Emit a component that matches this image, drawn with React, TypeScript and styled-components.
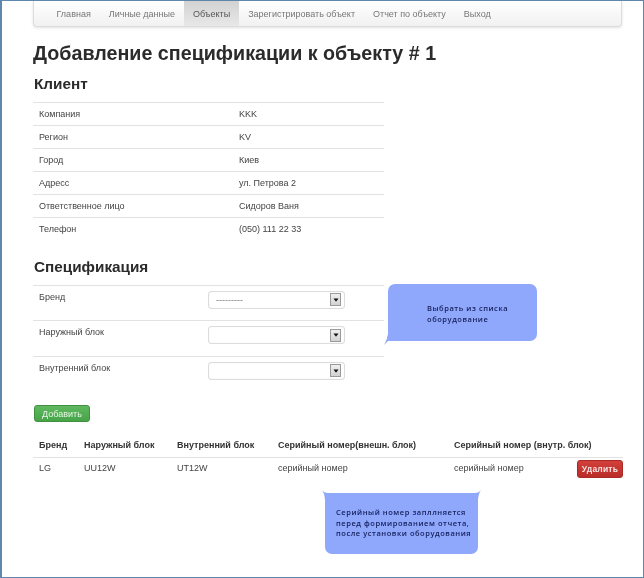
import React from "react";
import styled, { createGlobalStyle } from "styled-components";

const Global = createGlobalStyle`
  html, body { margin: 0; padding: 0; background: #fff; }
  body { font-family: "Liberation Sans", Arial, sans-serif; color: #333; }
  * { box-sizing: border-box; }
`;

const Frame = styled.div`
  position: relative;
  width: 644px;
  height: 578px;
  overflow: hidden;
  border: 1px solid #5f87ad;
  border-left-width: 2px;
  padding: 0 20px 0 31px;
  background: #fff;
  filter: blur(0.4px);
`;

const Navbar = styled.nav`
  display: flex;
  height: 26px;
  width: 589px;
  padding-left: 13.5px;
  border: 1px solid #dcdcdc;
  border-top: 0;
  border-radius: 0 0 4px 4px;
  background: linear-gradient(#ffffff, #f1f1f1);
  box-shadow: 0 1px 3px rgba(0, 0, 0, 0.12);
`;

const NavLink = styled.a<{ $active?: boolean }>`
  display: flex;
  align-items: center;
  padding: 1px 9px 0;
  font-size: 9px;
  color: ${(p) => (p.$active ? "#555" : "#777")};
  background: ${(p) => (p.$active ? "linear-gradient(#d2d2d2, #e8e8e8)" : "transparent")};
`;

const Title = styled.h1`
  margin: 14px 0 0;
  height: 25px;
  font-size: 19.7px;
  line-height: 25px;
  font-weight: 700;
  color: #2b2b2b;
  white-space: nowrap;
`;

const Subtitle = styled.h2`
  margin: 0 0 0 1px;
  font-size: 15.3px;
  line-height: 20px;
  font-weight: 700;
  color: #2b2b2b;
`;

const ClientHeading = styled(Subtitle)`
  margin-top: 8px;
  margin-bottom: 8px;
`;

const SpecHeading = styled(Subtitle)`
  margin-top: 16px;
  margin-bottom: 8px;
`;

const InfoTable = styled.table`
  width: 351px;
  border-collapse: collapse;
  font-size: 9px;
  color: #444;
`;

const InfoRow = styled.tr`
  height: 23px;
  border-top: 1px solid #e2e2e2;
`;

const InfoLabel = styled.td`
  width: 206px;
  padding: 0 0 0 6px;
`;

const InfoValue = styled.td`
  padding: 0;
`;

const SpecRow = styled.div`
  display: flex;
  justify-content: space-between;
  align-items: flex-start;
  width: 351px;
  height: 35.5px;
  padding: 5px 39px 0 6px;
  border-top: 1px solid #e2e2e2;
  font-size: 9px;
  color: #444;
`;

const SpecLabel = styled.span`
  margin-top: 1px;
  line-height: 11px;
`;

const FakeSelect = styled.div`
  display: flex;
  align-items: center;
  justify-content: space-between;
  width: 137px;
  height: 18px;
  padding: 0 3px 0 7px;
  border: 1px solid #dcdcdc;
  border-radius: 3px;
  background: #fff;
  box-shadow: inset 0 0 1px rgba(0, 0, 0, 0.15);
  color: #777;
  font-size: 9px;
`;

const SelectArrow = styled.span`
  display: flex;
  align-items: center;
  justify-content: center;
  width: 11px;
  height: 13px;
  border: 1px solid #9a9a9a;
  background: linear-gradient(#efefef, #d2d2d2);
`;

const AddButton = styled.button`
  display: block;
  width: 56px;
  height: 17px;
  margin: 14px 0 0 1px;
  padding: 0;
  border: 1px solid #3f9140;
  border-radius: 3px;
  background: linear-gradient(#5fb85f, #47a447);
  color: #e8f5e8;
  font: 9px "Liberation Sans", Arial, sans-serif;
`;

const DataTable = styled.table`
  width: 590px;
  margin-top: 17px;
  border-collapse: collapse;
  table-layout: fixed;
  font-size: 9px;
  color: #444;
`;

const HeadCell = styled.th<{ $w: number }>`
  width: ${(p) => p.$w}px;
  height: 18px;
  padding: 0 0 5px 6px;
  text-align: left;
  font-weight: 700;
  color: #333;
  white-space: nowrap;
  border-bottom: 1px solid #e2e2e2;
`;

const BodyCell = styled.td`
  height: 22px;
  padding: 0 0 0 6px;
  white-space: nowrap;
`;

const ActionCell = styled.td`
  padding: 2px 0 0;
  text-align: right;
`;

const DeleteButton = styled.button`
  display: block;
  width: 46px;
  height: 18px;
  padding: 0;
  border: 1px solid #ac2925;
  border-radius: 3px;
  background: linear-gradient(#d2403a, #b92c28);
  color: #f6e2e2;
  font: 700 8.5px "Liberation Sans", Arial, sans-serif;
  letter-spacing: 0.2px;
`;

const Bubble = styled.div<{ $x: number; $y: number; $w: number; $h: number }>`
  position: absolute;
  left: ${(p) => p.$x}px;
  top: ${(p) => p.$y}px;
  width: ${(p) => p.$w}px;
  height: ${(p) => p.$h}px;
  border-radius: 7px;
  background: #90a8fb;
  color: #141f5c;
  font-family: "Open Sans", "Noto Sans", sans-serif;
  font-size: 7.5px;
  font-weight: 600;
  line-height: 10.7px;
  letter-spacing: 0.55px;
`;

const BubbleText = styled.div<{ $l: number; $t: number }>`
  padding: ${(p) => p.$t}px 0 0 ${(p) => p.$l}px;
  white-space: nowrap;
`;

const Tail = styled.svg<{ $x: number; $y: number }>`
  position: absolute;
  left: ${(p) => p.$x}px;
  top: ${(p) => p.$y}px;
  fill: #90a8fb;
`;

const client: [string, string][] = [
  ["Компания", "KKK"],
  ["Регион", "KV"],
  ["Город", "Киев"],
  ["Адресс", "ул. Петрова 2"],
  ["Ответственное лицо", "Сидоров Ваня"],
  ["Телефон", "(050) 111 22 33"],
];

const spec: [string, string][] = [
  ["Бренд", "---------"],
  ["Наружный блок", ""],
  ["Внутренний блок", ""],
];

const heads: [string, number][] = [
  ["Бренд", 45],
  ["Наружный блок", 93],
  ["Внутренний блок", 101],
  ["Серийный номер(внешн. блок)", 176],
  ["Серийный номер (внутр. блок)", 129],
];

const Arrow = () => (
  <svg width="6" height="4" viewBox="0 0 6 4">
    <path d="M0.5 0.5H5.5L3 3.8Z" fill="#111" />
  </svg>
);

export default function App() {
  return (
    <>
      <Global />
      <Frame>
        <Navbar>
          {["Главная", "Личные данные", "Объекты", "Зарегистрировать объект", "Отчет по объекту", "Выход"].map((n) => (
            <NavLink key={n} $active={n === "Объекты"}>{n}</NavLink>
          ))}
        </Navbar>
        <Title>Добавление спецификации к объекту # 1</Title>
        <ClientHeading>Клиент</ClientHeading>
        <InfoTable>
          <tbody>
            {client.map(([k, v]) => (
              <InfoRow key={k}>
                <InfoLabel>{k}</InfoLabel>
                <InfoValue>{v}</InfoValue>
              </InfoRow>
            ))}
          </tbody>
        </InfoTable>
        <SpecHeading>Спецификация</SpecHeading>
        {spec.map(([k, v]) => (
          <SpecRow key={k}>
            <SpecLabel>{k}</SpecLabel>
            <FakeSelect>
              <span>{v}</span>
              <SelectArrow><Arrow /></SelectArrow>
            </FakeSelect>
          </SpecRow>
        ))}
        <AddButton>Добавить</AddButton>
        <DataTable>
          <thead>
            <tr>
              {heads.map(([h, w]) => (
                <HeadCell key={h} $w={w}>{h}</HeadCell>
              ))}
              <HeadCell $w={46} />
            </tr>
          </thead>
          <tbody>
            <tr>
              <BodyCell>LG</BodyCell>
              <BodyCell>UU12W</BodyCell>
              <BodyCell>UT12W</BodyCell>
              <BodyCell>серийный номер</BodyCell>
              <BodyCell>серийный номер</BodyCell>
              <ActionCell><DeleteButton>Удалить</DeleteButton></ActionCell>
            </tr>
          </tbody>
        </DataTable>

        <Bubble $x={386} $y={283} $w={149} $h={57}>
          <Tail $x={-4} $y={50} width="10" height="12" viewBox="0 0 10 12">
            <path d="M4 0H10V7H4Q3 8 0 11Q3 6 4 0Z" />
          </Tail>
          <BubbleText $l={39} $t={19}>Выбрать из списка<br />оборудование</BubbleText>
        </Bubble>
        <Bubble $x={323} $y={492} $w={153} $h={61}>
          <Tail $x={-3} $y={-3} width="10" height="14" viewBox="0 0 10 14">
            <path d="M0 0Q2 3 6 3H10V14H3Q3.5 5 0 0Z" />
          </Tail>
          <Tail $x={146} $y={-3} width="10" height="14" viewBox="0 0 10 14">
            <path d="M10 0Q8 3 4 3H0V14H7Q6.5 5 10 0Z" />
          </Tail>
          <BubbleText $l={11} $t={14}>
            Серийный номер запллняется<br />перед формированием отчета,<br />после установки оборудования
          </BubbleText>
        </Bubble>
      </Frame>
    </>
  );
}
